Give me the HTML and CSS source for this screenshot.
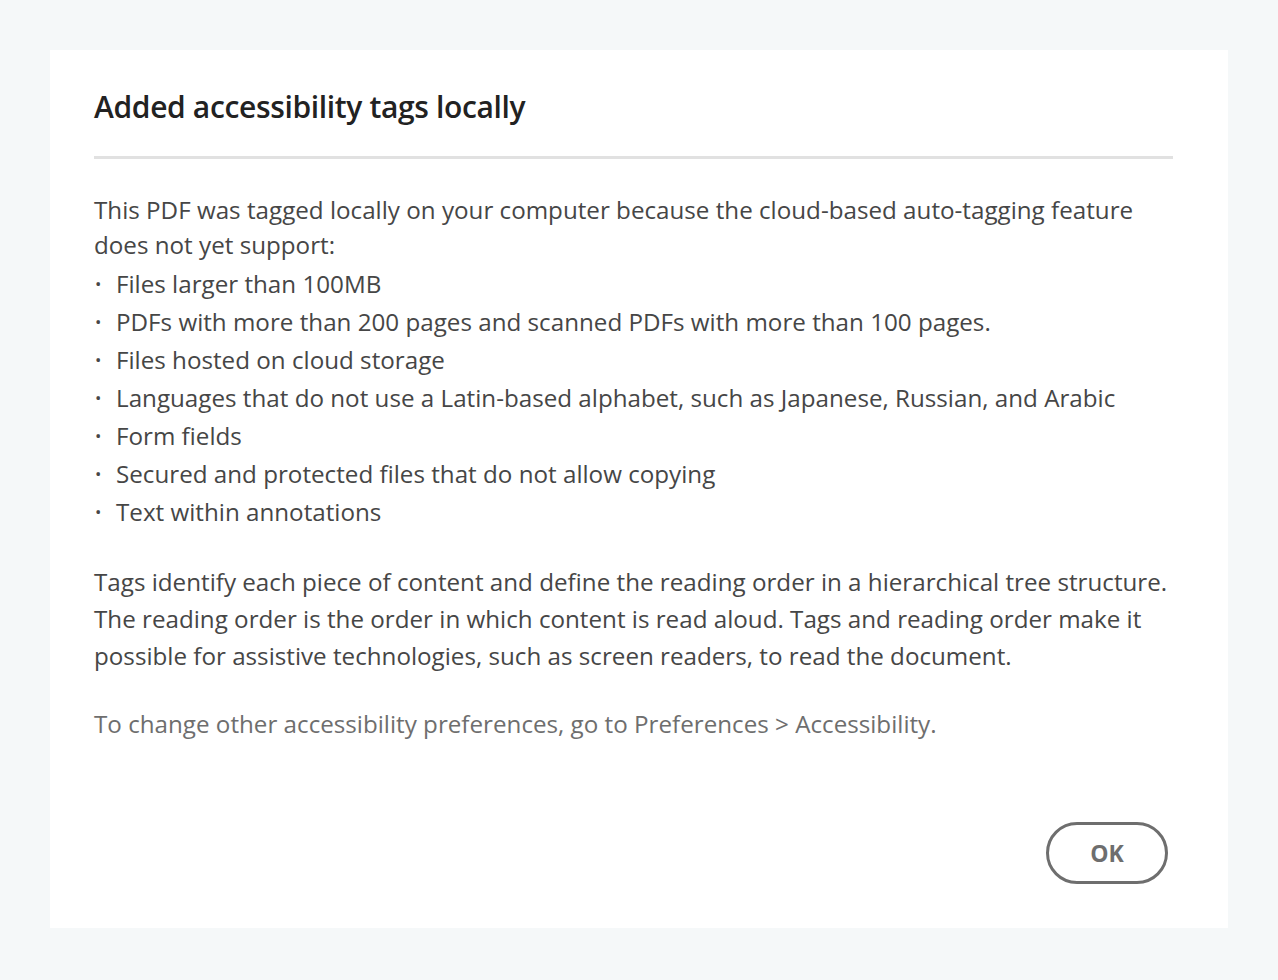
FILE: index.html
```html
<!DOCTYPE html>
<html lang="en">
<head>
<meta charset="utf-8">
<title>Added accessibility tags locally</title>
<link rel="stylesheet" href="styles.css">
</head>
<body>
<div class="page">
  <div class="dialog">
    <h1 class="title">Added accessibility tags locally</h1>
    <div class="divider"></div>
    <div class="content">
      <p class="intro">This PDF was tagged locally on your computer because the cloud-based auto-tagging feature does not yet support:</p>
      <ul class="list">
        <li>Files larger than 100MB</li>
        <li>PDFs with more than 200 pages and scanned PDFs with more than 100 pages.</li>
        <li>Files hosted on cloud storage</li>
        <li>Languages that do not use a Latin-based alphabet, such as Japanese, Russian, and Arabic</li>
        <li>Form fields</li>
        <li>Secured and protected files that do not allow copying</li>
        <li>Text within annotations</li>
      </ul>
      <p class="para">Tags identify each piece of content and define the reading order in a hierarchical tree structure. The reading order is the order in which content is read aloud. Tags and reading order make it possible for assistive technologies, such as screen readers, to read the document.</p>
      <p class="note">To change other accessibility preferences, go to Preferences &gt; Accessibility.</p>
    </div>
    <div class="footer">
      <button class="ok">OK</button>
    </div>
  </div>
</div>
</body>
</html>
```
FILE: styles.css
```css
html, body {
  margin: 0;
  padding: 0;
  background: #f5f8f9;
}
body {
  font-family: "Open Sans", "Liberation Sans", sans-serif;
  width: 1278px;
  height: 980px;
  overflow: hidden;
}
.page {
  padding: 50px 50px 0 50px;
}
.dialog {
  background: #ffffff;
  width: 1178px;
  height: 878px;
  box-sizing: border-box;
  padding: 0 55px 0 44px;
  display: flex;
  flex-direction: column;
}
.title {
  margin: 0;
  padding-top: 37px;
  font-size: 30px;
  line-height: 40px;
  font-weight: 600;
  color: #222222;
  letter-spacing: -0.35px;
}
.divider {
  margin-top: 29px;
  height: 3px;
  background: #e1e1e1;
}
.content {
  color: #464646;
  font-size: 24.2px;
  padding-top: 33px;
}
.intro {
  margin: 0;
  line-height: 35px;
}
.list {
  margin: 3px 0 0 0;
  padding: 0;
  list-style: none;
}
.list li {
  line-height: 38px;
  padding-left: 22px;
  position: relative;
}
.list li::before {
  content: "\2022";
  position: absolute;
  left: 1px;
  top: 0;
  font-size: 17px;
  color: #464646;
}
.para {
  margin: 32px 0 0 0;
  line-height: 37px;
}
.note {
  margin: 31px 0 0 0;
  line-height: 37px;
  color: #6e6e6e;
}
.footer {
  margin-top: auto;
  padding-bottom: 44px;
  display: flex;
  justify-content: flex-end;
  padding-right: 5px;
}
.ok {
  width: 122px;
  height: 62px;
  box-sizing: border-box;
  border: 3px solid #6e6e6e;
  border-radius: 31px;
  background: #ffffff;
  color: #6e6e6e;
  font-family: "Open Sans", "Liberation Sans", sans-serif;
  font-size: 23px;
  font-weight: 700;
  padding: 0;
}
```
